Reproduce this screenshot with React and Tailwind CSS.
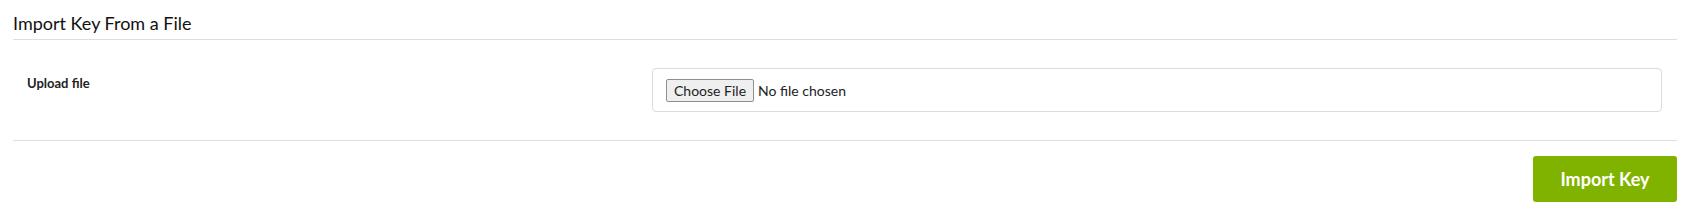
import React from "react";

function App() {
  return (
    <div className="w-full bg-white pl-[13px] pr-[29px] font-['Lato','Open_Sans',sans-serif] text-[#333]">

      {/* HEADING */}
      <div className="pt-[13px] pb-[6px] border-b border-[#dedede]">
        <h2 className="text-[18px] leading-[20px] font-normal text-[#111]">
          Import Key From a File
        </h2>
      </div>

      {/* UPLOAD ROW */}
      <div className="flex items-start px-[14px] pr-[15px] pt-[28px] pb-[28px] border-b border-[#dedede]">
        <label className="w-[625px] shrink-0 mt-[5px] text-[13px] leading-[20px] font-bold text-[#222]">
          Upload file
        </label>
        <div className="flex-1 h-[44px] flex items-center pl-[13px] border border-[#dcdcdc] rounded-[4px]">
          <input
            type="file"
            className="text-[14px] leading-[19px] text-[#222] file:mr-[4px] file:h-[23px] file:px-[7px] file:border file:border-[#8f8f8f] file:bg-[#efefef] file:rounded-[2px] file:text-[#222]"
          />
        </div>
      </div>

      {/* ACTIONS */}
      <div className="flex justify-end pt-[15px] pb-[19px]">
        <button className="w-[144px] h-[46px] rounded-[3px] bg-[#80b300] text-white text-[18px] font-bold">
          Import Key
        </button>
      </div>

    </div>
  );
}

export default App;
